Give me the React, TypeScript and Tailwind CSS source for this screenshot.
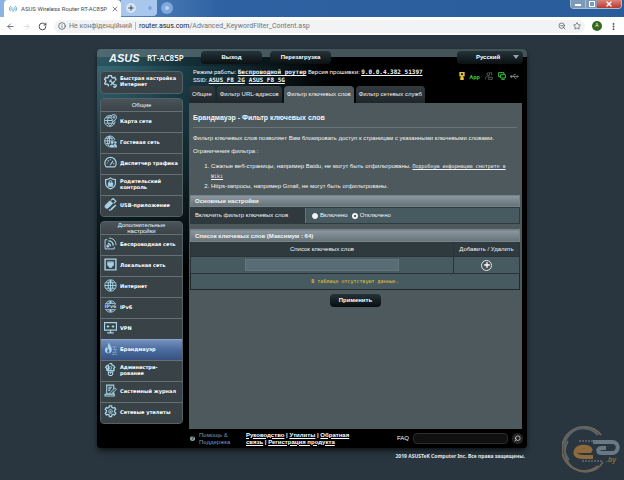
import { useState } from 'react';
import type { ReactNode } from 'react';
import { ArrowLeft, ArrowRight, Info, MoreVertical, Plus, RotateCw, Search, Star, X, ZoomOut } from 'lucide-react';

const GENERAL_ITEMS = [
    { icon: 'map', label: 'Карта сети' },
    { icon: 'guest', label: 'Гостевая сеть' },
    { icon: 'gauge', label: 'Диспетчер трафика' },
    { icon: 'shield', label: 'Родительский\nконтроль' },
    { icon: 'usb', label: 'USB-приложение' },
];

const ADVANCED_ITEMS = [
    { icon: 'wireless', label: 'Беспроводная сеть' },
    { icon: 'lan', label: 'Локальная сеть' },
    { icon: 'globe', label: 'Интернет' },
    { icon: 'ipv6', label: 'IPv6' },
    { icon: 'vpn', label: 'VPN' },
    { icon: 'firewall', label: 'Брандмауэр', active: true },
    { icon: 'admin', label: 'Администри-\nрование' },
    { icon: 'log', label: 'Системный журнал' },
    { icon: 'tools', label: 'Сетевые утилиты' },
];

const TABS = ['Общие', 'Фильтр URL-адресов', 'Фильтр ключевых слов', 'Фильтр сетевых служб'];

const GLOBE = 'M12 1.500a10.500 10.500 0 1 0 0 21 10.500 10.500 0 0 0 0-21zM2 12h20M4 7h16M4 17h16M12 2c-6 5-6 15 0 20M12 2c6 5 6 15 0 20M12 2v20';
const GEAR = 'M10 1.500h4l.6 3 2.200 1.200 2.900-1 2 3.500-2.300 2v2.600l2.300 2-2 3.500-2.900-1-2.200 1.200-.6 3h-4l-.6-3-2.200-1.200-2.900 1-2-3.500 2.300-2v-2.600l-2.300-2 2-3.500 2.900 1L9.400 4.500z';

const ICONS: Record<string, ReactNode> = {
    quick: (
        <>
            <path d="M8 21v-3l-3-1.500-2.500 1L1 15l2-2v-3L1 8l2-3.500 3 1 2-1.200L8.500 1h5l.8 3 2.400 1.400L20 4.500l2 3.800-1.500 1.700" strokeWidth="2.600" />
            <path d="m11 10 9 9M12 19l8-8M11 13a3 3 0 0 1 3-4M17 21l3 2 3-3-2-3" strokeWidth="2.400" />
        </>
    ),
    map: (
        <>
            <path d="M14 3.500A10 10 0 1 0 20.500 14M2 12h13M4 7h9M4 17h15M11 3c-6 5-6 14 0 19M11 22c4-3 5-6 5-9" />
            <path d="M18 14c-4-5-5-6-5-8a5 5 0 0 1 10 0c0 2-1 3-5 8z" fill="#465258" />
            <circle cx="18" cy="6" r="1.500" />
        </>
    ),
    guest: (
        <>
            <path d="M20 9A9.500 9.500 0 1 0 10 21M1 11h18M3 6h14M3 16h8M10 2c-5 5-5 14 0 19M10 2c4 3 5 5 5 8M10 2v14" />
            <g fill="currentColor" stroke="none">
                <circle cx="15" cy="14" r="2.600" />
                <circle cx="21" cy="14" r="2.300" />
                <path d="M10 23c0-7 9-7 10 0zM18 17c4-1 6 1 6 6h-3z" />
            </g>
        </>
    ),
    gauge: (
        <>
            <path d="M4 20a10.500 10.500 0 1 1 16 0z" strokeWidth="2.200" />
            <path d="m11 17 6-8M5 13h2M7 8l2 2M12 6v2M17 14h2" strokeWidth="2" />
        </>
    ),
    shield: (
        <>
            <path d="M12 2c3 2 6 3 9 3v7c0 5-4 8-9 10-5-2-9-5-9-10V5c3 0 6-1 9-3z" strokeWidth="2.200" />
            <path d="M8 11h8v6H8z" fill="currentColor" />
            <path d="M9.500 11V9a2.500 2.500 0 0 1 5 0v2" />
        </>
    ),
    usb: (
        <>
            <path d="m3 13 8-8 5 5-8 8c-4 3-8-1-5-5z" fill="currentColor" />
            <path d="m13 4 4-3 5 5-4 4M9 22c5 2 6-3 9-5l4-4M5 15l6-6M13 20l7-6" strokeWidth="2.200" />
        </>
    ),
    wireless: (
        <>
            <path d="M6 5H2v17h17v-4M9 2c8 0 13 5 13 13" />
            <path d="M8 7c6 0 9 3 9 9M7 12c3 0 5 2 5 5" strokeWidth="2.400" />
            <circle cx="7" cy="17" r="2" fill="currentColor" />
        </>
    ),
    lan: (
        <>
            <path d="M2 2h20v20H2z" strokeWidth="2.600" />
            <path d="M7 7h10v7h-2.500v3h-5v-3H7z" fill="currentColor" />
            <path d="M9 6v3M12 6v3M15 6v3" stroke="#465258" strokeWidth="1" />
        </>
    ),
    globe: <path d={GLOBE} />,
    ipv6: (
        <>
            <path d={GLOBE} />
            <path d="M0 7.500h24v9H0z" fill="#394247" stroke="none" />
            <text x="12" y="15.500" textAnchor="middle" fontSize="9" fontWeight="700" fill="currentColor" stroke="none">IPv6</text>
        </>
    ),
    vpn: (
        <>
            <path d="M1 3h22v14H1zM12 17v4M6 22h12" strokeWidth="2.200" />
            <path d="M6 10h4M14 10h4M8 8l-2 2 2 2M16 8l2 2-2 2" strokeWidth="2" />
        </>
    ),
    firewall: (
        <>
            <path d="M9 1c1 5 7 8 5 16-1 4-10 6-12 0-1-4 1-7 3-8 0 2 1 3 2 3 0-4 0-7 2-11z" fill="currentColor" stroke="none" />
            <path d="M8 12c2 3 3 8 0 8s-3-4 0-8z" fill="#4a6a9a" stroke="none" />
            <path d="M15 9h8M16 14h8M15 19h9M19 9v5M21 14v5M18 19v3M14 23h10" strokeWidth="1.300" opacity=".6" />
        </>
    ),
    admin: (
        <>
            <path d="M10 1h4l1 3 3 1 2 3-2 2 1 3-3 2M8 14l-3-1 .500-3L3 8l2-3 3-1z" strokeWidth="2.400" />
            <circle cx="12" cy="9" r="2.500" />
            <path d="M6 14h12M8 17v4l2 2h4l2-2v-4zM12 17v3" strokeWidth="2" />
        </>
    ),
    log: (
        <>
            <path d="M5 2h13v16H5zM2 19h17v3H2zM8 6h7M8 9h5M8 12h3" strokeWidth="2" />
            <path d="m11 16 9-9 3 3-9 8-4 1z" fill="#465258" strokeWidth="1.600" />
        </>
    ),
    tools: (
        <>
            <path d={GEAR} strokeWidth="2.400" />
            <path d="M9 14v-4l3-2 3 2v4l-3 2zM12 11v3" strokeWidth="1.800" />
        </>
    ),
};

function MenuIcon({ name }: { name: string }) {
    return (
        <svg viewBox="0 0 24 24" className="size-[13px] shrink-0 text-[#a6d3e8]" fill="none" stroke="currentColor" strokeWidth="1.800" aria-hidden="true">
            {ICONS[name]}
        </svg>
    );
}

function MenuItem({ icon, label, active }: { icon: string; label: string; active?: boolean }) {
    return (
        <li>
            <a
                href="#"
                className={
                    active
                        ? 'flex h-[21px] items-center gap-[3px] border-t border-[#8ba4cb] bg-linear-to-b from-[#7390bd] via-[#4a6a9f] to-[#36527f] pb-[3px] pl-[3px] font-bold text-white'
                        : 'flex h-[21px] items-center gap-[3px] border-t border-[#657176] bg-[#394247] pb-[3px] pl-[3px] font-bold text-white'
                }
            >
                <MenuIcon name={icon} />
                <span className="whitespace-pre-line">{label}</span>
            </a>
        </li>
    );
}

function Menu({ title, items }: { title: string; items: { icon: string; label: string; active?: boolean }[] }) {
    return (
        <nav className="overflow-hidden rounded-sm border border-[#566166] bg-[#394247]">
            <h2 className="flex h-3 items-center justify-center bg-linear-to-b from-[#4a5459] to-[#3b4448] px-3 text-center font-[Liberation_Sans,sans-serif] text-[6px] leading-[6px] text-gray-100">
                {title}
            </h2>
            <ul>
                {items.map((item) => (
                    <MenuItem key={item.label} {...item} />
                ))}
            </ul>
        </nav>
    );
}

function BrowserBar() {
    return (
        <header className="font-[Roboto,sans-serif] text-[#44484c]">
            <div className="flex h-[17px] items-start justify-between bg-linear-to-r from-[#8cb3e2] via-[#2d62a2] via-35% to-[#2a5c9a]">
                <div className="flex">
                    <div className="ml-1 flex h-[17px] w-[117px] items-center gap-1 rounded-t bg-white pr-1 pl-[5px] text-[6px]">
                        <svg viewBox="0 0 14 12" className="size-2 shrink-0" fill="none" stroke="#2f9cb8" strokeWidth="1.400" aria-hidden="true">
                            <path d="M3 1C0 4 0 7 3 10M11 1c3 3 3 6 0 9M5 3c-2 2-2 3 0 5M9 3c2 2 2 3 0 5M7 5v6" />
                        </svg>
                        <span className="flex-1 whitespace-nowrap">ASUS Wireless Router RT-AC85P</span>
                        <button type="button" aria-label="Закрыть вкладку"><X className="size-2" /></button>
                    </div>
                    <div className="flex h-4 w-9 items-center gap-3 rounded-br bg-[#a9c7ed] pl-[5px]">
                        <button type="button" aria-label="Новая вкладка" className="rounded-full bg-[#d5e4f7] p-px text-black"><Plus className="size-2" /></button>
                        <span className="size-1 rounded-full bg-[#7fa8dc]" />
                    </div>
                    <span className="mt-0.5 ml-1 flex size-3 items-center justify-center rounded-full bg-[#7fa9de]"><span className="size-1 rounded-full bg-[#b9d3f2]" /></span>
                </div>
                <div className="mr-0.5 flex h-[9px] overflow-hidden rounded-b-sm border border-t-0 border-[#a9bdd3] text-white">
                    <button type="button" aria-label="Свернуть" className="flex w-[14px] items-end justify-center bg-[#7d9abb] pb-0.5"><span className="h-0.5 w-1.5 bg-white" /></button>
                    <button type="button" aria-label="Развернуть" className="flex w-3 items-center justify-center border-l border-[#a9bdd3] bg-[#7d9abb]"><span className="size-1.5 border border-white" /></button>
                    <button type="button" aria-label="Закрыть" className="flex w-6 items-center justify-center bg-linear-to-b from-[#d9827a] to-[#b9382c]"><X className="size-2" strokeWidth={4} /></button>
                </div>
            </div>
            <div className="flex h-[18px] items-center gap-[7px] bg-white px-1.5">
                <button type="button" aria-label="Назад"><ArrowLeft className="size-[9px]" /></button>
                <button type="button" aria-label="Вперёд"><ArrowRight className="size-[9px] text-gray-300" /></button>
                <button type="button" aria-label="Обновить"><RotateCw className="size-[9px]" strokeWidth={2.5} /></button>
                <div className="flex h-[13px] flex-1 items-center gap-[3px] rounded-full bg-[#f1f3f4] px-1 text-[7px]">
                    <Info className="size-2" />
                    <span className="text-[#70757a]">Не конфіденційний</span>
                    <span className="h-2 w-px bg-[#b8bcc0]" />
                    <p className="flex-1 text-[#70757a]"><span className="text-[#202124]">router.asus.com</span>/Advanced_KeywordFilter_Content.asp</p>
                    <ZoomOut className="size-2" />
                    <Star className="ml-1 size-2" />
                </div>
                <span className="flex size-2.5 items-center justify-center rounded-full bg-[#33691e] text-[5px] text-white">A</span>
                <button type="button" aria-label="Меню"><MoreVertical className="size-[9px]" strokeWidth={3} /></button>
            </div>
        </header>
    );
}

function TopBar() {
    return (
        <div className="flex h-[17px] items-center bg-linear-to-b from-[#55686e]/80 from-45% to-black/20 to-50% pr-1">
            <svg viewBox="0 0 34 10" className="ml-3 h-2.5 w-[34px]" role="img" aria-label="ASUS">
                <text x="0" y="9" fontFamily="Liberation Sans" fontSize="11" fontWeight="700" fontStyle="italic" fill="#f3f7f8">ASUS</text>
            </svg>
            <span className="ml-1 w-[54px] font-['Open_Sans',sans-serif] text-[8px] leading-[10px] font-semibold text-white">RT-AC85P</span>
            <button type="button" className="h-[13px] w-[61px] rounded-sm bg-linear-to-b from-[#25343a] to-[#0b1113] text-[6px] font-bold text-white">Выход</button>
            <button type="button" className="ml-2 h-[13px] w-[61px] rounded-sm bg-linear-to-b from-[#25343a] to-[#0b1113] text-[6px] font-bold text-white">Перезагрузка</button>
            <div className="relative ml-auto flex">
                <select aria-label="Язык" className="h-[13px] w-[66px] appearance-none rounded-sm bg-linear-to-b from-[#25343a] to-[#0b1113] pr-1 text-center text-[6px] font-bold text-white">
                    <option>Русский</option>
                </select>
                <svg viewBox="0 0 6 4" className="pointer-events-none absolute top-1 right-1 h-1 w-1.5" aria-hidden="true"><path d="M0 0h6L3 4z" fill="#8fa3ad" /></svg>
            </div>
        </div>
    );
}

function StatusLine() {
    return (
        <div className="flex h-[20px] justify-between pt-0.5 pr-[3px] pl-1 font-[Roboto,sans-serif] text-gray-100">
            <div className="text-[6px] leading-[8px] whitespace-nowrap">
                <p>
                    Режим работы: <a href="#" className="font-[DejaVu_Sans_Mono,monospace] font-bold underline">Беспроводной роутер</a>{' '}
                    Версия прошивки: <a href="#" className="font-[DejaVu_Sans_Mono,monospace] font-bold underline">9.0.0.4.382_51397</a>
                </p>
                <p>
                    SSID: <a href="#" className="font-[DejaVu_Sans_Mono,monospace] font-bold underline">ASUS_F8_2G</a>
                    <a href="#" className="ml-1 font-[DejaVu_Sans_Mono,monospace] font-bold underline">ASUS_F8_5G</a>
                </p>
            </div>
            <div className="flex h-4 items-center gap-1 text-[6px] font-bold text-[#35c63a]">
                <svg viewBox="0 0 6 9" className="h-2 w-1.5" fill="#e2c23e" aria-hidden="true"><path fillRule="evenodd" d="M0 0h6v5H4v1h1v3H1V6h1V5H0zm2 1.500v2h2v-2z" /></svg>
                <span className="mr-px">App</span>
                <svg viewBox="0 0 12 12" className="size-2" fill="none" stroke="#59605f" strokeWidth="1.300" aria-hidden="true"><circle cx="5" cy="3" r="2" /><path d="M1 11V8l2-2h4M7 1h3v4M5 11V8h6v3z" /></svg>
                <svg viewBox="0 0 12 12" className="ml-px size-2" fill="none" stroke="#35c63a" strokeWidth="1.500" aria-hidden="true"><path d="M3 7H1V1h8v2M4 4h7v5H4zM5 11h5" /></svg>
                <svg viewBox="0 0 14 8" className="h-[5px] w-[9px]" fill="none" stroke="#7b8382" strokeWidth="1.400" aria-hidden="true"><path d="M1 4h12M11 2l2 2-2 2M4 4l2-3h3M6 4l2 3h2" /><circle cx="2" cy="4" r="1.500" fill="#7b8382" /></svg>
            </div>
        </div>
    );
}

function FilterTabs() {
    return (
        <div className="flex h-[17px] gap-0.5 text-[6px] text-gray-100">
            {TABS.map((tab) => (
                <a
                    key={tab}
                    href="#"
                    className={
                        tab === 'Фильтр ключевых слов'
                            ? 'flex items-center rounded-t-sm bg-[#4d595d] px-[3px] whitespace-nowrap'
                            : 'flex items-center rounded-t-sm bg-linear-to-b from-[#343b3e] to-[#20272a] px-[3px] whitespace-nowrap'
                    }
                >
                    {tab}
                </a>
            ))}
        </div>
    );
}

function KeywordFilter() {
    const [enabled, setEnabled] = useState(false);
    const [keyword, setKeyword] = useState('');
    const radio = 'size-1.5 appearance-none rounded-full border border-gray-100 bg-gray-100 checked:border-2 checked:bg-[#222a2d]';
    const heading = 'h-3 border border-[#76838a] bg-linear-to-b from-[#8b989f] to-[#667379] px-1 text-left text-[6px] leading-[10px] font-bold';

    return (
        <main className="h-[326px] bg-[#4d595d] px-px text-[6px] text-gray-100">
            <div className="px-[3px] pt-2.5">
                <h1 className="text-[7px] leading-[10px] font-bold">Брандмауэр - Фильтр ключевых слов</h1>
                <hr className="mt-1 mr-px border-[#697579]" />
                <p className="mt-1.5 leading-[8px]">Фильтр ключевых слов позволяет Вам блокировать доступ к страницам с указанными ключевыми словами.</p>
                <p className="mt-[5px] leading-[8px]">Ограничения фильтра :</p>
                <ol className="mt-1.5 list-decimal pr-1 pl-[18px] leading-[10px]">
                    <li>
                        Сжатые веб-страницы, например Baidu, не могут быть отфильтрованы.{' '}
                        <a href="#" className="font-[DejaVu_Sans_Mono,monospace] text-[5px] underline">Подробную информацию смотрите в Wiki</a>
                    </li>
                    <li>Https-запросы, например Gmail, не могут быть отфильтрованы.</li>
                </ol>
            </div>

            <section className="mt-1 mr-px">
                <h2 className={heading}>Основные настройки</h2>
                <div className="flex h-[17px] items-center border border-[#30393d] bg-[#475a5f]">
                    <span className="flex h-full w-[115px] items-center border-r border-[#6a7579] bg-[#2f3a3e] pl-1">Включить фильтр ключевых слов</span>
                    <label className="ml-1.5 flex items-center gap-0.5">
                        <input type="radio" name="filter" className={radio} checked={enabled} onChange={() => setEnabled(true)} />
                        Включено
                    </label>
                    <label className="ml-1 flex items-center gap-0.5">
                        <input type="radio" name="filter" className={radio} checked={!enabled} onChange={() => setEnabled(false)} />
                        Отключено
                    </label>
                </div>
            </section>

            <table className="mt-[5px] w-[calc(100%-1px)] table-fixed border-collapse">
                <colgroup>
                    <col />
                    <col className="w-[66px]" />
                </colgroup>
                <thead>
                    <tr>
                        <th colSpan={2} className={heading}>Список ключевых слов (Максимум : 64)</th>
                    </tr>
                    <tr className="h-[15px] bg-[#2f3a3e]">
                        <th className="border border-[#29333a] font-normal">Список ключевых слов</th>
                        <th className="border border-[#29333a] font-normal">Добавить / Удалить</th>
                    </tr>
                </thead>
                <tbody className="bg-[#475a5f]">
                    <tr className="h-[17px]">
                        <td className="border border-[#29333a] text-center">
                            <input
                                aria-label="Ключевое слово"
                                className="mx-auto block h-3 w-[154px] border border-[#64767c] bg-[#596b74] px-1"
                                value={keyword}
                                onChange={(e) => setKeyword(e.target.value)}
                            />
                        </td>
                        <td className="border border-[#29333a]">
                            <button type="button" aria-label="Добавить" className="mx-auto flex size-[11px] items-center justify-center rounded-full border border-gray-200 bg-[#4a5356]">
                                <Plus className="size-2 text-white" strokeWidth={4} />
                            </button>
                        </td>
                    </tr>
                    <tr className="h-4">
                        <td colSpan={2} className="border border-[#1f292d] text-center font-[DejaVu_Sans_Mono,monospace] text-[5px] text-[#f0cc3c]">В таблице отсутствуют данные.</td>
                    </tr>
                </tbody>
            </table>

            <button type="button" className="mx-auto mt-1 block h-[13px] w-[51px] rounded-sm bg-linear-to-b from-[#25343a] to-[#080e10] text-[6px] font-bold text-white">Применить</button>
        </main>
    );
}

function Footer() {
    return (
        <footer className="flex h-[19px] items-center bg-black pr-1 pl-[93px] text-[6px] leading-[7px] text-white">
            <span className="mr-1 flex size-[5px] items-center justify-center rounded-full bg-[#8ba6aa] text-[5px] font-bold text-black">?</span>
            <a href="#" className="w-[47px] text-[#6c96cc]">Помощь & Поддержка</a>
            <div className="w-[106px] font-bold">
                <p><a href="#" className="underline">Руководство</a> | <a href="#" className="underline">Утилиты</a> | <a href="#" className="underline">Обратная</a></p>
                <p><a href="#" className="underline">связь</a> | <a href="#" className="underline">Регистрация продукта</a></p>
            </div>
            <label htmlFor="faq" className="ml-auto">FAQ</label>
            <input id="faq" className="ml-1 h-[11px] w-[95px] rounded border border-[#2c2c2c] bg-[#101010] px-1" />
            <button type="button" aria-label="Поиск" className="ml-1 rounded-full bg-[#242424] p-0.5"><Search className="size-[7px] -scale-x-100" /></button>
        </footer>
    );
}

function Watermark() {
    return (
        <svg viewBox="0 0 60 50" className="pointer-events-none absolute right-0.5 bottom-1.5 h-[50px] w-[60px] opacity-60" fill="none" aria-hidden="true">
            <path d="M39 11A22 22 0 1 0 36 42" stroke="#a08468" strokeWidth="2" />
            <path d="M36 11A19 19 0 0 0 7 36" stroke="#718493" strokeWidth="2" />
            <path d="M41 38A19 19 0 0 1 6 17" stroke="#9a8266" strokeWidth="1.500" />
            <path d="M17 17h14M20 37h20" stroke="#8a8f8c" strokeWidth="1.500" strokeDasharray="2 1" />
            <path d="M16 27h12c3-4-9-6-13-2-4 5 0 8 6 8h10" stroke="#d08f3c" strokeWidth="4" />
            <path d="M31 18h19c8 0 7 10 1 11H40c-5 0-5-5 0-5h4" stroke="#93a4b4" strokeWidth="4" />
            <text x="44" y="38" fontFamily="Liberation Sans" fontSize="7" fontWeight="700" fontStyle="italic" fill="#d08f3c">.by</text>
        </svg>
    );
}

export default function App() {
    return (
        <div className="relative min-h-screen bg-[#29363f] font-[Liberation_Sans,Arial,sans-serif]">
            <BrowserBar />
            <div className="mx-auto mt-3.5 max-w-[430px]">
                <div className="overflow-hidden rounded-sm bg-black shadow-md shadow-black/50">
                    <div className="bg-[radial-gradient(circle_at_0_0,#3b7180_0,#193b45_90px,#000_240px)]">
                        <TopBar />
                        <div className="flex gap-1.5 pr-[5px] pl-[3px]">
                            <aside className="flex w-[83px] shrink-0 flex-col gap-1 pt-[5px] font-[DejaVu_Sans,sans-serif] text-[5px] leading-[6px]">
                                <a href="#" className="flex h-[23px] items-center gap-[3px] rounded-sm border border-[#566166] bg-[#394247] pb-[3px] pl-[3px] font-bold text-white">
                                    <MenuIcon name="quick" />
                                    <span>Быстрая настройка Интернет</span>
                                </a>
                                <Menu title="Общие" items={GENERAL_ITEMS} />
                                <Menu title="Дополнительные настройки" items={ADVANCED_ITEMS} />
                            </aside>
                            <div className="min-w-0 flex-1">
                                <StatusLine />
                                <FilterTabs />
                                <KeywordFilter />
                            </div>
                        </div>
                    </div>
                    <Footer />
                </div>
                <p className="mt-1 pr-0.5 text-right font-['Noto_Sans',sans-serif] text-[5px] leading-[8px] font-bold text-gray-200">2019 ASUSTeK Computer Inc. Все права защищены.</p>
            </div>
            <Watermark />
        </div>
    );
}
